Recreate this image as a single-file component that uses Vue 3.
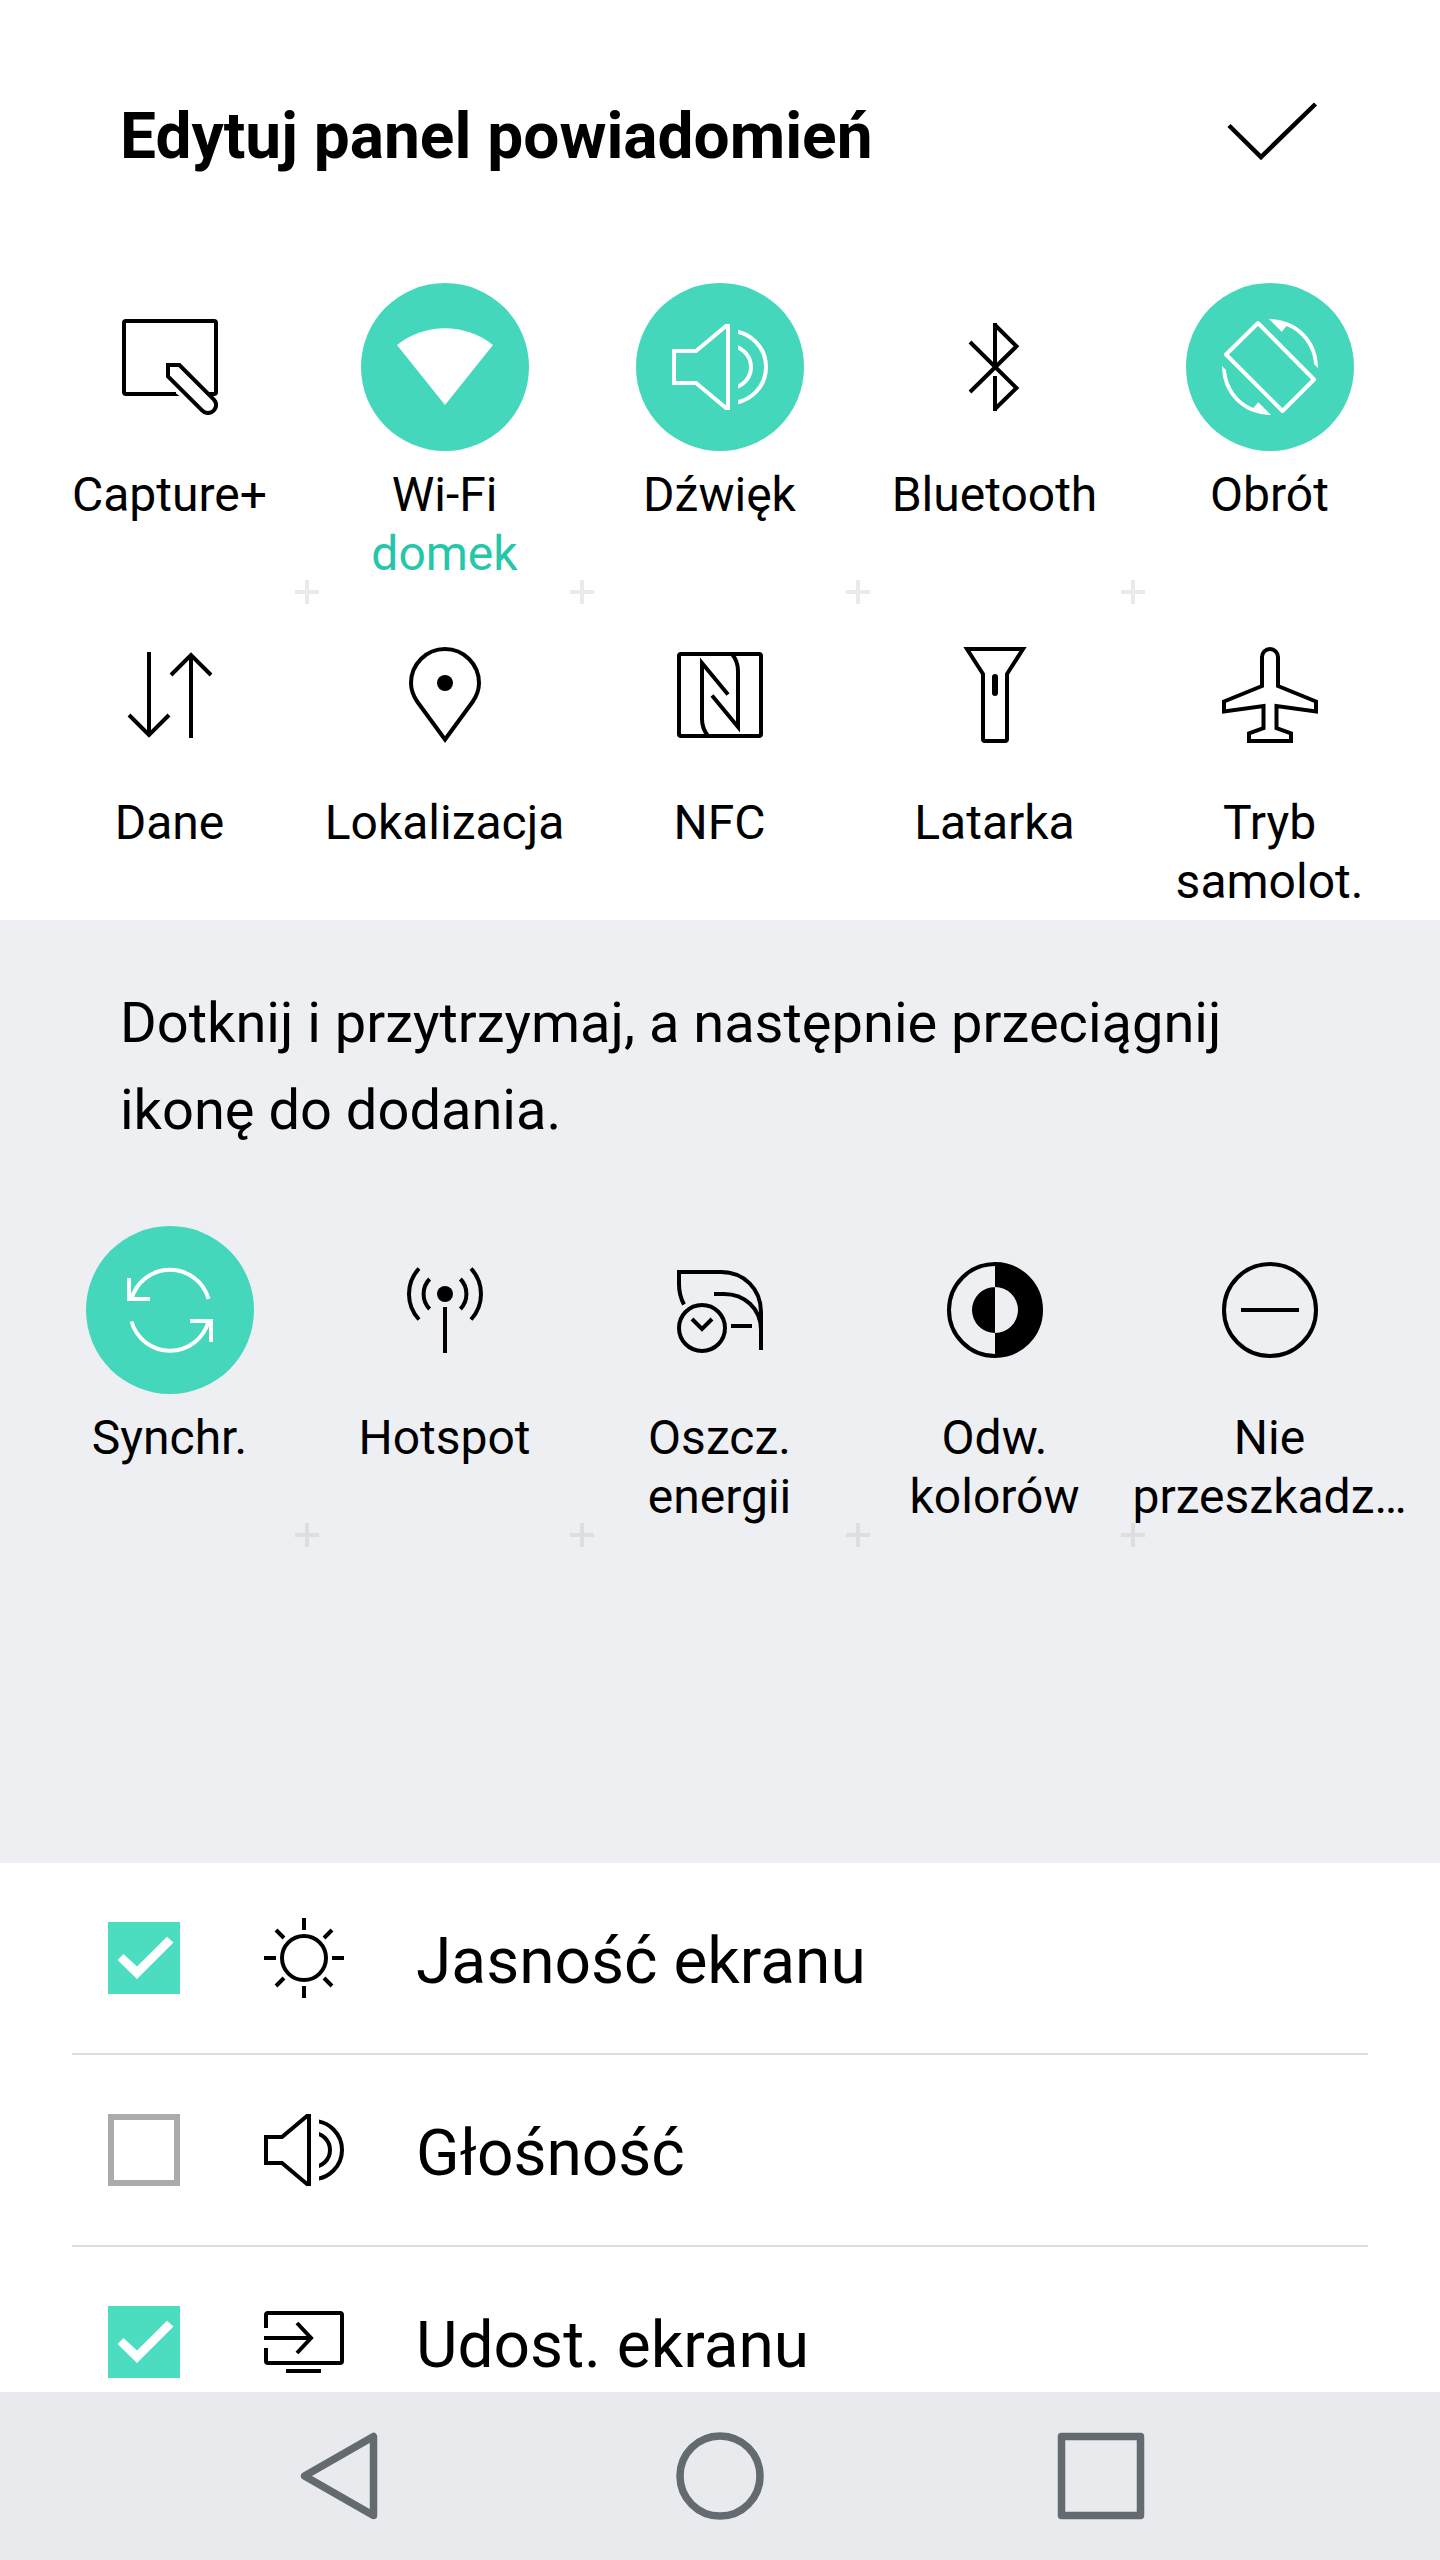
<template>
  <div class="screen">
    <header class="header">
      <h1 class="title">Edytuj panel powiadomień</h1>
      <svg class="confirm" viewBox="0 0 96 64" @click="save">
        <path d="M5 27.500L37 59L91.500 6" />
      </svg>
    </header>

    <section class="tiles active-tiles">
      <div v-for="tile in activeTiles" :key="tile.id" class="tile">
        <div class="tile-icon" :class="{ on: tile.on }" @click="tile.on = !tile.on">
          <svg viewBox="0 0 96 96" v-html="icons[tile.id]"></svg>
        </div>
        <div class="tile-label">{{ tile.label }}</div>
        <div v-if="tile.sub" class="tile-sub">{{ tile.sub }}</div>
      </div>
    </section>

    <section class="available">
      <p class="hint">Dotknij i przytrzymaj, a następnie przeciągnij ikonę do dodania.</p>
      <div class="tiles">
        <div v-for="tile in availableTiles" :key="tile.id" class="tile">
          <div class="tile-icon" :class="{ on: tile.on }" @click="tile.on = !tile.on">
            <svg viewBox="0 0 96 96" v-html="icons[tile.id]"></svg>
          </div>
          <div class="tile-label">{{ tile.label }}</div>
        </div>
      </div>
    </section>

    <section class="options">
      <div v-for="option in options" :key="option.id" class="option">
        <div class="checkbox" :class="{ checked: option.checked }" @click="option.checked = !option.checked">
          <svg v-if="option.checked" viewBox="0 0 72 72">
            <path d="M9.500 38L15.500 32L29 44.500L59 14.700L65.500 20.500L29 57Z" />
          </svg>
        </div>
        <svg class="option-icon" viewBox="0 0 80 80" v-html="icons[option.id]"></svg>
        <span class="option-label">{{ option.label }}</span>
      </div>
    </section>

    <nav class="navbar">
      <svg viewBox="0 0 88 88"><path d="M9.500 44L78.500 4.500V83.500Z" /></svg>
      <svg viewBox="0 0 88 88"><circle cx="44" cy="44" r="40" /></svg>
      <svg viewBox="0 0 88 88"><rect x="4.500" y="4.500" width="79" height="79" /></svg>
    </nav>
  </div>
</template>

<script setup>
import { ref } from 'vue'

const activeTiles = ref([
  { id: 'capture', label: 'Capture+', on: false },
  { id: 'wifi', label: 'Wi-Fi', sub: 'domek', on: true },
  { id: 'sound', label: 'Dźwięk', on: true },
  { id: 'bluetooth', label: 'Bluetooth', on: false },
  { id: 'rotation', label: 'Obrót', on: true },
  { id: 'data', label: 'Dane', on: false },
  { id: 'location', label: 'Lokalizacja', on: false },
  { id: 'nfc', label: 'NFC', on: false },
  { id: 'torch', label: 'Latarka', on: false },
  { id: 'airplane', label: 'Tryb\nsamolot.', on: false }
])

const availableTiles = ref([
  { id: 'sync', label: 'Synchr.', on: true },
  { id: 'hotspot', label: 'Hotspot', on: false },
  { id: 'battery', label: 'Oszcz.\nenergii', on: false },
  { id: 'invert', label: 'Odw.\nkolorów', on: false },
  { id: 'dnd', label: 'Nie\nprzeszkadz…', on: false }
])

const options = ref([
  { id: 'brightness', label: 'Jasność ekranu', checked: true },
  { id: 'volume', label: 'Głośność', checked: false },
  { id: 'share', label: 'Udost. ekranu', checked: true }
])

// Tile icons use a 96x96 box, option icons 80x80
const icons = {
  capture: `
    <path d="M54 75H4a2 2 0 0 1-2-2V4a2 2 0 0 1 2-2H92a2 2 0 0 1 2 2V73a2 2 0 0 1-2 2H87"/>
    <path fill="currentColor" stroke="none" d="M52 73l5.500 4h-5.500z"/>
    <path d="M46 46H57.400L91.700 80.300A8 8 0 0 1 80.300 91.700L46 57.400Z"/>`,
  wifi: '<path fill="currentColor" stroke="none" d="M0 26A77 77 0 0 1 96 26L48 86Z"/>',
  sound: `
    <path d="M2 32H24L54 7H56V89H54L24 64H2Z"/>
    <svg x="66" y="0" width="30" height="96">
      <circle cx="-8" cy="48" r="36"/><circle cx="-8" cy="48" r="21"/>
    </svg>`,
  bluetooth: '<path d="M48 4V50M48 6L69.500 27.300L23 73M23 23L69.500 69L48 90M48 92V57"/>',
  rotation: `
    <path stroke-linejoin="round" d="M36 4L4 35.500L60.500 92L92 60.500Z"/>
    <path id="turn" fill="currentColor" stroke="none" d="M47 0A48 48 0 0 1 96 49L92 45A44.500 44.500 0 0 0 64.700 7L59.700 12.700Z"/>
    <use href="#turn" transform="rotate(180 48 48)"/>`,
  data: '<path d="M27 5V88M7 68L27 88L47 68M69 91V8M49 28L69 8L89 28"/>',
  location: `
    <path d="M48 92.500L20.500 55C17 50 14 43 14 36A34 34 0 0 1 82 36C82 43 79 50 75.500 55Z"/>
    <circle cx="48" cy="36" r="8" fill="currentColor" stroke="none"/>`,
  nfc: `
    <rect x="7" y="7" width="82" height="82" rx="2"/>
    <path d="M36 89C32 84 30 80 30 72V16L56 47.500M60 7C64 12 66 16 66 24V80L40 48.500"/>`,
  torch: `
    <path d="M20 2H76L60 27V92a2 2 0 0 1-2 2H38a2 2 0 0 1-2-2V27Z"/>
    <path stroke-width="6" stroke-linecap="round" d="M48 30V46"/>`,
  airplane: '<path d="M40 10a8 8 0 0 1 16 0V39L94 54.500V64.500L54.500 59V81L69 86.500V94H27V86.500L41.500 81V59L2 64.500V54.500L40 39Z"/>',
  sync: `
    <path d="M7 16V37H28M9.500 37A40 40 0 0 1 86.500 37"/>
    <path d="M68 59H89V80M9.500 59.500A40 40 0 0 0 86.500 59.500"/>`,
  hotspot: `
    <circle cx="48" cy="32" r="8" fill="currentColor" stroke="none"/>
    <path d="M48 45V91M32.600 17A21.700 21.700 0 0 0 32.600 47M63.400 17A21.700 21.700 0 0 1 63.400 47"/>
    <path d="M22 6.500A37.500 37.500 0 0 0 22 57.500M74 6.500A37.500 37.500 0 0 1 74 57.500"/>`,
  battery: `
    <path d="M12 42.500C9 37 7 31 7 22V10H49C72 10 89 27 89 50V88M42 32H52C72 32 89 46 89 68"/>
    <circle cx="30" cy="66" r="23"/>
    <path d="M20 57L30 67L40 57M59 64H80"/>`,
  invert: `
    <circle cx="48" cy="48" r="46"/>
    <path fill="currentColor" stroke="none" d="M48 1A47 47 0 0 1 48 95V71A23 23 0 0 1 48 25A23 23 0 0 1 48 71V95V1Z" fill-rule="evenodd"/>`,
  dnd: '<circle cx="48" cy="48" r="46"/><path d="M19 48H77"/>',
  brightness: `
    <circle cx="40" cy="40" r="22"/>
    <path d="M40 0V12M40 68V80M0 40H12M68 40H80M12 12L20 20M60 60L68 68M12 68L20 60M60 20L68 12"/>`,
  volume: `
    <path d="M2 27H18L43 6H45V74H43L18 53H2Z"/>
    <svg x="55" y="0" width="25" height="80">
      <circle cx="-6" cy="40" r="29"/><circle cx="-6" cy="40" r="17"/>
    </svg>`,
  share: `
    <path d="M2 26V13a2 2 0 0 1 2-2H76a2 2 0 0 1 2 2V59a2 2 0 0 1-2 2H4a2 2 0 0 1-2-2V46"/>
    <path d="M0 36H47M33 21L47 36L33 51M22 69H57"/>`
}

const save = () => {
  console.log('save panel', activeTiles.value.map((t) => t.id))
}
</script>

<style>
body {
  margin: 0;
  background: #fff;
}
</style>

<style scoped>
.screen {
  width: 1440px;
  height: 2560px;
  display: flex;
  flex-direction: column;
  overflow: hidden;
  background: #fff;
  color: #000;
  font-family: Roboto, "Noto Sans", sans-serif;
}

.header {
  display: flex;
  justify-content: space-between;
  align-items: flex-start;
  height: 283px;
  padding: 98px 120px 0;
  box-sizing: border-box;
}

.title {
  margin: 0;
  font-size: 64px;
  line-height: 77px;
  font-weight: 700;
  white-space: nowrap;
}

.confirm {
  width: 96px;
  height: 64px;
  fill: none;
  stroke: #000;
  stroke-width: 4.5;
}

.tiles {
  display: grid;
  grid-template-columns: repeat(5, 275px);
  grid-auto-rows: 328px;
  padding-left: 32px;
}

.active-tiles {
  height: 637px;
}

.tile {
  position: relative;
  display: flex;
  flex-direction: column;
  align-items: center;
  font-size: 48px;
  line-height: 59px;
  text-align: center;
}

/* plus marks between neighbouring tiles of the first row */
.tile:nth-child(-n + 4)::before,
.tile:nth-child(-n + 4)::after {
  content: '';
  position: absolute;
  background: #e9eaee;
}

.tile::before {
  top: 307px;
  right: -12px;
  width: 24px;
  height: 4px;
}

.tile::after {
  top: 297px;
  right: -2px;
  width: 4px;
  height: 24px;
}

.tile:nth-child(n + 3)::before {
  right: -13px;
}

.tile:nth-child(n + 3)::after {
  right: -3px;
}

.available .tile:nth-child(-n + 4)::before,
.available .tile:nth-child(-n + 4)::after {
  background: #dddee0;
}

.tile-icon {
  display: flex;
  align-items: center;
  justify-content: center;
  width: 168px;
  height: 168px;
  margin: 0 0 14px 1px;
  border-radius: 50%;
}

.tile-icon.on {
  background: #44d7bb;
  color: #fff;
}

.tile-icon svg {
  width: 96px;
  height: 96px;
  fill: none;
  stroke: currentColor;
  stroke-width: 4;
}

.tile-label {
  white-space: pre;
}

.tile-sub {
  color: #26c6aa;
}

.available {
  height: 943px;
  padding-top: 60px;
  box-sizing: border-box;
  background: #eeeff3;
}

.hint {
  margin: 0 120px 72px;
  font-size: 56px;
  line-height: 87px;
}

.options {
  height: 529px;
  padding: 0 72px;
  overflow: hidden;
}

.option {
  display: flex;
  align-items: center;
  height: 190px;
  padding-left: 36px;
  border-bottom: 2px solid #ddd;
}

.checkbox {
  width: 72px;
  height: 72px;
  box-sizing: border-box;
  border: 6px solid #a9abad;
}

.checkbox.checked {
  border: none;
  background: #4cdcc0;
}

.checkbox svg {
  display: block;
  fill: #fff;
}

.option-icon {
  width: 80px;
  height: 80px;
  margin: 0 72px 0 84px;
  fill: none;
  stroke: #000;
  stroke-width: 4;
}

.option-label {
  font-size: 64px;
  line-height: 76px;
  padding-top: 8px;
}

.navbar {
  display: flex;
  align-items: center;
  justify-content: center;
  gap: 293px;
  height: 168px;
  background: #e9eaed;
}

.navbar svg {
  width: 88px;
  height: 88px;
  fill: none;
  stroke: #636b70;
  stroke-width: 7.5;
  stroke-linejoin: round;
}
</style>
